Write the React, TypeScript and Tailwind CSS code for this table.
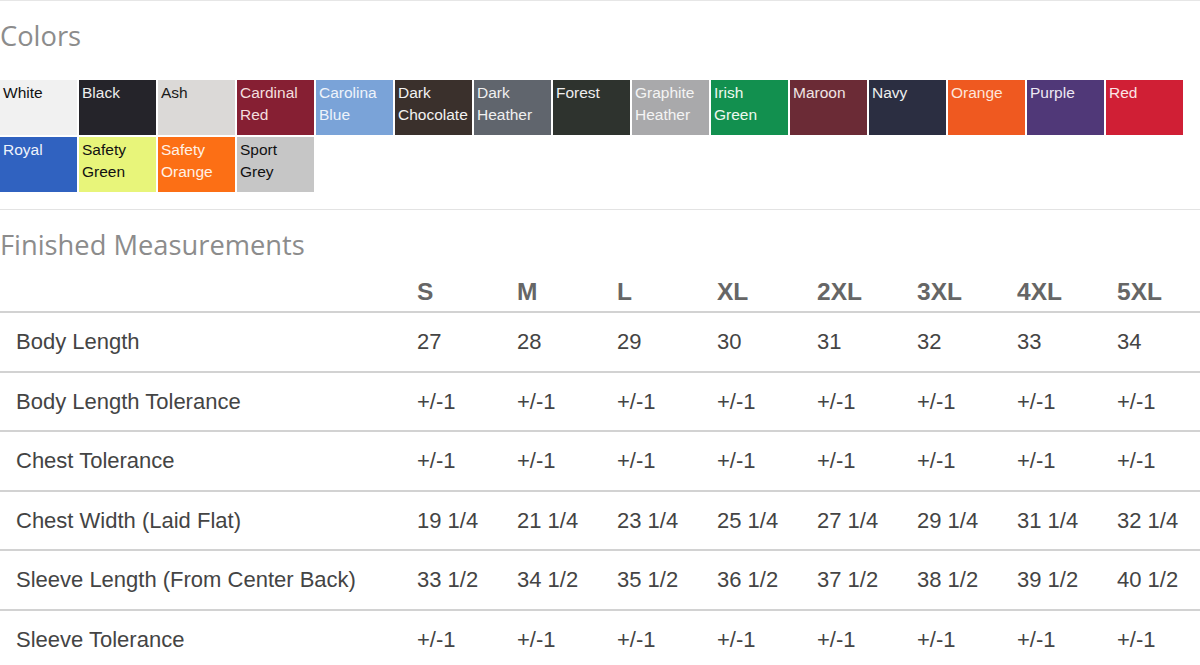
const swatches = [
  { name: ['White'], bg: 'bg-[#f1f1f1]', fg: 'text-[#111]' },
  { name: ['Black'], bg: 'bg-[#25242a]', fg: 'text-[#eee]' },
  { name: ['Ash'], bg: 'bg-[#dbd9d7]', fg: 'text-[#1a1a1a]' },
  { name: ['Cardinal', 'Red'], bg: 'bg-[#861f33]', fg: 'text-[#f3dede]' },
  { name: ['Carolina', 'Blue'], bg: 'bg-[#7aa3d8]', fg: 'text-[#eef3fb]' },
  { name: ['Dark', 'Chocolate'], bg: 'bg-[#3a302c]', fg: 'text-[#f2f2f2]' },
  { name: ['Dark', 'Heather'], bg: 'bg-[#60656d]', fg: 'text-[#f0f0f0]' },
  { name: ['Forest'], bg: 'bg-[#2e332e]', fg: 'text-[#eee]' },
  { name: ['Graphite', 'Heather'], bg: 'bg-[#a9a9ab]', fg: 'text-[#f4f4f4]' },
  { name: ['Irish', 'Green'], bg: 'bg-[#12904f]', fg: 'text-[#eef8f0]' },
  { name: ['Maroon'], bg: 'bg-[#6b2b36]', fg: 'text-[#f0e4e4]' },
  { name: ['Navy'], bg: 'bg-[#2b2e41]', fg: 'text-[#eee]' },
  { name: ['Orange'], bg: 'bg-[#ef5920]', fg: 'text-[#fde5da]' },
  { name: ['Purple'], bg: 'bg-[#503878]', fg: 'text-[#eee8f4]' },
  { name: ['Red'], bg: 'bg-[#d01f35]', fg: 'text-[#fbe4e6]' },
  { name: ['Royal'], bg: 'bg-[#3062c0]', fg: 'text-[#eef2fb]' },
  { name: ['Safety', 'Green'], bg: 'bg-[#e8f57a]', fg: 'text-[#111]' },
  { name: ['Safety', 'Orange'], bg: 'bg-[#fc6f15]', fg: 'text-[#fff1e6]' },
  { name: ['Sport', 'Grey'], bg: 'bg-[#c6c6c6]', fg: 'text-[#111]' },
]

const sizes = ['S', 'M', 'L', 'XL', '2XL', '3XL', '4XL', '5XL']

const rows: { label: string; values: string[] }[] = [
  { label: 'Body Length', values: ['27', '28', '29', '30', '31', '32', '33', '34'] },
  { label: 'Body Length Tolerance', values: Array(8).fill('+/-1') },
  { label: 'Chest Tolerance', values: Array(8).fill('+/-1') },
  { label: 'Chest Width (Laid Flat)', values: ['19 1/4', '21 1/4', '23 1/4', '25 1/4', '27 1/4', '29 1/4', '31 1/4', '32 1/4'] },
  { label: 'Sleeve Length (From Center Back)', values: ['33 1/2', '34 1/2', '35 1/2', '36 1/2', '37 1/2', '38 1/2', '39 1/2', '40 1/2'] },
  { label: 'Sleeve Tolerance', values: Array(8).fill('+/-1') },
]

const heading = "text-[27.3px] leading-[32px] text-[#8c8c8c] font-['Open_Sans',sans-serif]"
const cols = 'grid grid-cols-[417px_repeat(8,100px)]'

export default function App() {
  return (
    <div className="w-[1200px] h-[665px] overflow-hidden bg-white border-t border-[#e6e6e6] font-['Liberation_Sans',Arial,sans-serif]">
      <h2 className={`${heading} pt-[19px] mb-[28px]`}>Colors</h2>

      <div className="grid grid-cols-[repeat(15,77px)] auto-rows-[55px] gap-[2px]">
        {swatches.map((s) => (
          <div key={s.name.join(' ')} className={`${s.bg} ${s.fg} pl-[3px] pt-[2px] text-[15.5px] leading-[22px]`}>
            {s.name.map((line) => (
              <div key={line}>{line}</div>
            ))}
          </div>
        ))}
      </div>

      <div className="mt-[17px] border-t border-[#e3e3e3]" />
      <h2 className={`${heading} pt-[19px]`}>Finished Measurements</h2>

      <div className={`${cols} h-[50px] items-end pb-[5px]`}>
        <div />
        {sizes.map((s) => (
          <div key={s} className="text-[24.5px] leading-[28px] font-bold text-[#666]">{s}</div>
        ))}
      </div>

      {rows.map((r) => (
        <div key={r.label} className={`${cols} h-[59.5px] items-center border-t-2 border-[#d2d2d2] text-[22px] text-[#444]`}>
          <div className="pl-[16px]">{r.label}</div>
          {r.values.map((v, i) => (
            <div key={i}>{v}</div>
          ))}
        </div>
      ))}
    </div>
  )
}
